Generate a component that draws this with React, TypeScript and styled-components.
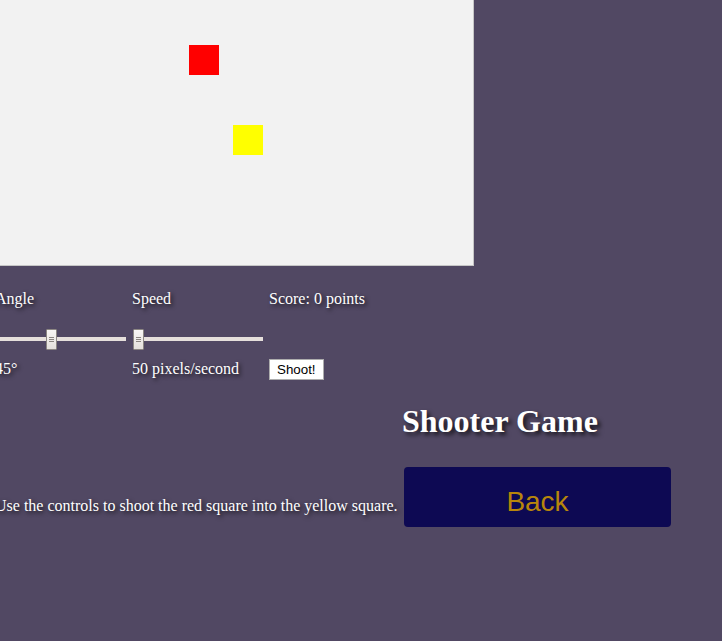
import React, { useState } from "react";
import styled, { createGlobalStyle } from "styled-components";

const GlobalStyle = createGlobalStyle`
  html, body {
    margin: 0;
    padding: 0;
    background: #514863;
    overflow: hidden;
  }
  body {
    font-family: "Liberation Serif", "Times New Roman", serif;
    font-size: 16px;
    color: #ffffff;
  }
`;

const Page = styled.div`
  margin: -4px 0 0 -5px;
  width: 740px;
  text-shadow: 2px 2px 4px rgba(0, 0, 0, 0.75);
`;

const GameCanvas = styled.div`
  position: relative;
  width: 477px;
  height: 268px;
  border: 1px solid #c6c6c6;
  background: #f2f2f2;
`;

const Square = styled.div<{ $color: string; $x: number; $y: number }>`
  position: absolute;
  left: ${(p) => p.$x}px;
  top: ${(p) => p.$y}px;
  width: 30px;
  height: 30px;
  background: ${(p) => p.$color};
`;

const Controls = styled.div`
  margin-top: 24px;
  display: grid;
  grid-template-columns: 137px 137px auto;
  align-items: start;
`;

const Label = styled.div`
  line-height: normal;
  white-space: nowrap;
`;

const Slider = styled.input`
  -webkit-appearance: none;
  appearance: none;
  display: block;
  width: 130px;
  height: 4px;
  margin: 28.5px 0 19.7px 1px;
  padding: 0;
  background: transparent;
  outline: none;

  &::-webkit-slider-runnable-track {
    height: 4px;
    background: #e6e0dc;
    border: none;
  }

  &::-webkit-slider-thumb {
    -webkit-appearance: none;
    appearance: none;
    box-sizing: border-box;
    width: 11px;
    height: 21px;
    margin-top: -8px;
    border: 1px solid #8c8783;
    border-radius: 1px;
    background:
      linear-gradient(#8a8580, #8a8580) 2px 7px / 5px 1px no-repeat,
      linear-gradient(#8a8580, #8a8580) 2px 9px / 5px 1px no-repeat,
      linear-gradient(#8a8580, #8a8580) 2px 11px / 5px 1px no-repeat,
      linear-gradient(#f8f6f4, #e4e0dc);
    cursor: pointer;
  }
`;

const ShootButton = styled.button`
  margin-top: -3px;
  padding: 2px 7px 2px;
  border: 1px solid #adadad;
  border-radius: 0;
  background: #ffffff;
  color: #000000;
  font-family: "Liberation Sans", Arial, sans-serif;
  font-size: 13.333px;
  line-height: normal;
  text-shadow: none;
  cursor: pointer;
`;

const Lower = styled.div`
  margin-top: 22.8px;
  display: flex;
  align-items: last baseline;
`;

const Instructions = styled.p`
  margin: 0;
  width: 407px;
  flex: none;
  white-space: nowrap;
  line-height: normal;
`;

const Side = styled.div`
  display: flex;
  flex-direction: column;
  align-items: flex-start;
`;

const Title = styled.h1`
  margin: 0;
  font-size: 32px;
  font-weight: bold;
  line-height: normal;
  text-shadow: 3px 3px 4px rgba(0, 0, 0, 0.7);
`;

const BackButton = styled.button`
  box-sizing: border-box;
  margin: 27px 0 0 2px;
  width: 267px;
  height: 60px;
  padding: 19px 0 9px;
  border: none;
  border-radius: 4px;
  background: #0d0953;
  color: #b8860b;
  font-family: "Liberation Sans", Arial, sans-serif;
  font-size: 28px;
  line-height: normal;
  text-align: center;
  text-shadow: none;
  cursor: pointer;
`;

export default function App() {
  const [angle, setAngle] = useState(45);
  const [speed, setSpeed] = useState(50);
  const [score] = useState(0);

  return (
    <>
      <GlobalStyle />
      <Page>
        <GameCanvas>
          <Square $color="#ff0000" $x={193} $y={48} />
          <Square $color="#ffff00" $x={237} $y={128} />
        </GameCanvas>
        <Controls>
          <Label>Angle</Label>
          <Label>Speed</Label>
          <Label>Score: {score} points</Label>

          <Slider
            type="range"
            min={0}
            max={107}
            value={angle}
            onChange={(e) => setAngle(Number(e.target.value))}
          />
          <Slider
            type="range"
            min={50}
            max={500}
            value={speed}
            onChange={(e) => setSpeed(Number(e.target.value))}
          />
          <div />

          <Label>{angle}°</Label>
          <Label>{speed} pixels/second</Label>
          <div>
            <ShootButton>Shoot!</ShootButton>
          </div>
        </Controls>
        <Lower>
          <Instructions>
            Use the controls to shoot the red square into the yellow square.
          </Instructions>
          <Side>
            <Title>Shooter Game</Title>
            <BackButton>Back</BackButton>
          </Side>
        </Lower>
      </Page>
    </>
  );
}
